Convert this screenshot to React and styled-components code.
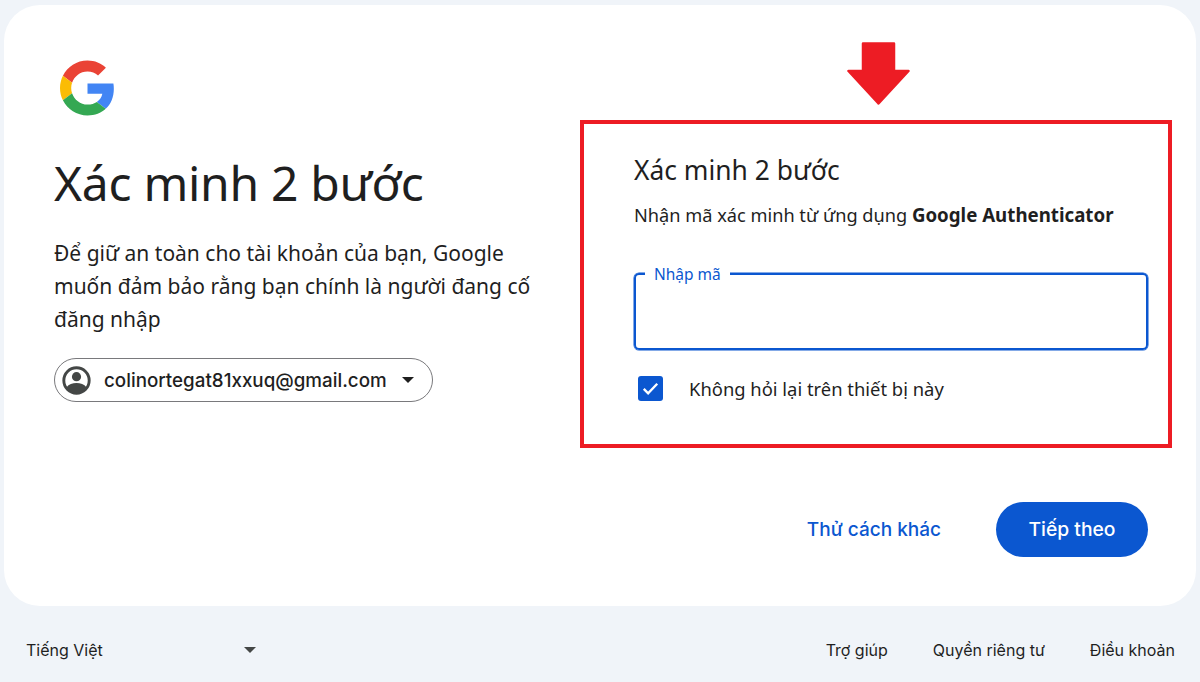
import React from 'react'
import styled, { createGlobalStyle } from 'styled-components'

const Global = createGlobalStyle`
  html, body { margin: 0; padding: 0; background: #f0f4f9; }
  body { font-family: Inter, "Noto Sans", sans-serif; color: #1f1f1f; }
`

const Page = styled.div`
  width: 1200px;
  height: 682px;
  overflow: hidden;
  padding: 5px 4px 0;
  box-sizing: border-box;
`

const Card = styled.main`
  height: 601px;
  background: #fff;
  border-radius: 36px;
  display: grid;
  grid-template-columns: 576px 592px;
  grid-template-rows: 433px 1fr;
  box-sizing: border-box;
`

const Intro = styled.section`
  padding: 55px 0 0 50px;
`

const Logo = styled.svg`
  display: block;
  width: 55px;
  height: 56px;
  margin-left: 5.500px;
`

const Title = styled.h1`
  margin: 38px 0 0;
  font-size: 48px;
  line-height: 58px;
  font-weight: 400;
  letter-spacing: -0.3px;
  font-family: "Noto Sans", sans-serif;
`

const Lead = styled.p`
  margin: 25px 0 0;
  width: 490px;
  font-size: 21px;
  line-height: 33px;
  font-family: "Noto Sans", sans-serif;
`

const Account = styled.div`
  margin-top: 22px;
  width: 379px;
  height: 44px;
  box-sizing: border-box;
  border: 1px solid #79797c;
  border-radius: 22px;
  display: flex;
  align-items: center;
  padding: 0 18px 0 7px;
  font-size: 18.800px;
  font-weight: 500;
`

const AccountName = styled.span`
  margin-left: 13px;
  flex: 1;
`

const Caret = styled.span`
  width: 0;
  height: 0;
  border-left: 6px solid transparent;
  border-right: 6px solid transparent;
  border-top: 6px solid ${p => p.$color || '#1f1f1f'};
`

const Highlight = styled.section`
  position: relative;
  margin-top: 115px;
  height: 328px;
  box-sizing: border-box;
  border: 4px solid #ed1c24;
  padding: 28px 20px 0 50px;
`

const Arrow = styled.svg`
  position: absolute;
  left: 263px;
  top: -82px;
  width: 63px;
  height: 63px;
`

const BoxTitle = styled.h2`
  margin: 0;
  font-size: 26.400px;
  line-height: 36px;
  font-weight: 400;
  font-family: "Noto Sans", sans-serif;
`

const BoxText = styled.p`
  margin: 14px 0 0;
  font-size: 18.200px;
  line-height: 26px;
  font-family: "Noto Sans", sans-serif;

  b { font-weight: 700; font-size: 18.700px; }
`

const Field = styled.div`
  position: relative;
  margin-top: 45px;
  height: 77px;
  box-sizing: border-box;
  border: 2px solid #0b57d0;
  border-radius: 5px;
  box-shadow: 0 0 0 0.5px #0b57d0;
`

const FieldLabel = styled.span`
  position: absolute;
  left: 9px;
  top: -11px;
  padding: 0 9px;
  background: #fff;
  color: #0b57d0;
  font-size: 15.500px;
  line-height: 20px;
  font-family: "Noto Sans", sans-serif;
`

const CheckRow = styled.label`
  display: flex;
  align-items: center;
  margin: 26px 0 0 4px;
  font-size: 18.400px;
  font-family: "Noto Sans", sans-serif;
`

const CheckBox = styled.span`
  width: 25px;
  height: 25px;
  border-radius: 3px;
  background: #0b57d0;
  display: flex;
  align-items: center;
  justify-content: center;
  margin-right: 26px;
`

const Actions = styled.div`
  grid-column: 2;
  display: flex;
  justify-content: flex-end;
  align-items: flex-start;
  gap: 55px;
  padding: 64px 24px 0 0;
`

const LinkButton = styled.span`
  color: #0b57d0;
  font-size: 19px;
  font-weight: 500;
  line-height: 55px;
`

const Primary = styled.span`
  width: 152px;
  height: 54px;
  padding-bottom: 1px;
  border-radius: 28px;
  background: #0b57d0;
  color: #fff;
  font-size: 19.300px;
  font-weight: 500;
  display: flex;
  align-items: center;
  justify-content: center;
`

const Footer = styled.footer`
  display: flex;
  align-items: center;
  padding: 12px 21px 0 22px;
  height: 76px;
  box-sizing: border-box;
  font-size: 16px;
`

const Language = styled.div`
  width: 230px;
  display: flex;
  align-items: center;
  justify-content: space-between;
`

const FooterLinks = styled.nav`
  margin-left: auto;
  display: flex;
  gap: 45px;
`

function GoogleMark() {
  return (
    <Logo viewBox="0 0 48 48">
      <path fill="#EA4335" d="M24 9.5c3.54 0 6.71 1.22 9.21 3.6l6.85-6.85C35.9 2.38 30.47 0 24 0 14.62 0 6.51 5.38 2.56 13.22l7.98 6.19C12.43 13.72 17.74 9.5 24 9.5z" />
      <path fill="#4285F4" d="M46.98 24.55c0-1.57-.15-3.09-.38-4.55H24v9.02h12.94c-.58 2.96-2.26 5.48-4.78 7.18l7.73 6c4.51-4.18 7.09-10.36 7.09-17.65z" />
      <path fill="#FBBC05" d="M10.53 28.59c-.48-1.45-.76-2.99-.76-4.59s.27-3.14.76-4.59l-7.98-6.19C.92 16.46 0 20.12 0 24c0 3.88.92 7.54 2.56 10.78l7.97-6.19z" />
      <path fill="#34A853" d="M24 48c6.48 0 11.93-2.13 15.89-5.81l-7.73-6c-2.15 1.45-4.92 2.3-8.16 2.3-6.26 0-11.57-4.22-13.47-9.91l-7.98 6.19C6.51 42.62 14.62 48 24 48z" />
    </Logo>
  )
}

function UserIcon() {
  return (
    <svg width="29" height="29" viewBox="0 0 24 24">
      <circle cx="12" cy="12" r="10.5" fill="none" stroke="#444746" strokeWidth="2.400" />
      <circle cx="12" cy="8.800" r="3.800" fill="#444746" />
      <path fill="#444746" d="M3.800 17.600c1.800-2.500 4.900-3.500 8.200-3.500s6.400 1 8.200 3.500c-1.800 3-4.800 4.700-8.200 4.700s-6.400-1.700-8.200-4.700z" />
    </svg>
  )
}

export default function App() {
  return (
    <Page>
      <Global />
      <Card>
        <Intro>
          <GoogleMark />
          <Title>Xác minh 2 bước</Title>
          <Lead>Để giữ an toàn cho tài khoản của bạn, Google muốn đảm bảo rằng bạn chính là người đang cố đăng nhập</Lead>
          <Account>
            <UserIcon />
            <AccountName>colinortegat81xxuq@gmail.com</AccountName>
            <Caret />
          </Account>
        </Intro>
        <Highlight>
          <Arrow viewBox="0 0 63 63">
            <path fill="#ed1c24" stroke="#ed1c24" strokeWidth="2.500" strokeLinejoin="round" d="M16 1.500h31V29h14.500L31.500 61.500 1.500 29H16z" />
          </Arrow>
          <BoxTitle>Xác minh 2 bước</BoxTitle>
          <BoxText>Nhận mã xác minh từ ứng dụng <b>Google Authenticator</b></BoxText>
          <Field>
            <FieldLabel>Nhập mã</FieldLabel>
          </Field>
          <CheckRow>
            <CheckBox>
              <svg width="19" height="19" viewBox="0 0 24 24">
                <path fill="none" stroke="#fff" strokeWidth="3" d="M3.500 12.500l5.500 5.500L20.500 6" />
              </svg>
            </CheckBox>
            Không hỏi lại trên thiết bị này
          </CheckRow>
        </Highlight>
        <Actions>
          <LinkButton>Thử cách khác</LinkButton>
          <Primary>Tiếp theo</Primary>
        </Actions>
      </Card>
      <Footer>
        <Language>
          Tiếng Việt
          <Caret $color="#444746" />
        </Language>
        <FooterLinks>
          <span>Trợ giúp</span>
          <span>Quyền riêng tư</span>
          <span>Điều khoản</span>
        </FooterLinks>
      </Footer>
    </Page>
  )
}
